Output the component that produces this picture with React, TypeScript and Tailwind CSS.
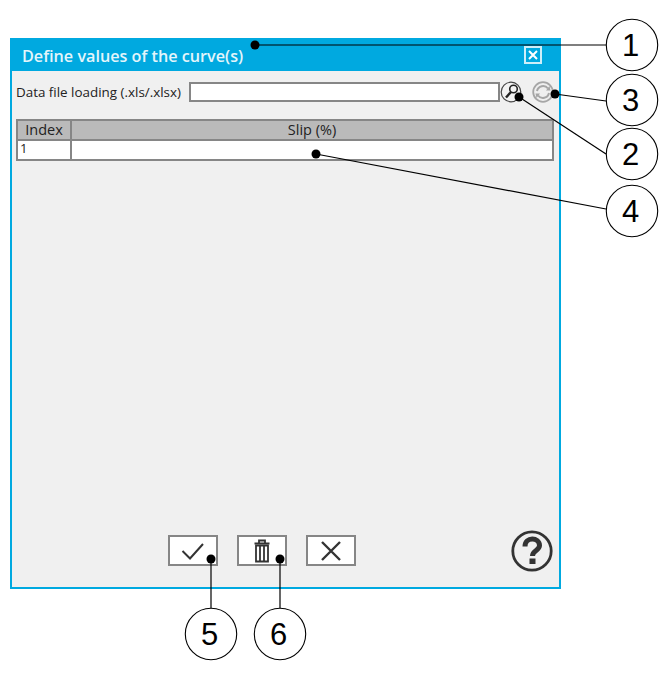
const callouts = [
  { n: "1", cx: 632, cy: 45, x1: 255, y1: 45, x2: 606, y2: 45 },
  { n: "3", cx: 632, cy: 100, x1: 555, y1: 94, x2: 606, y2: 101 },
  { n: "2", cx: 632, cy: 154, x1: 519, y1: 97, x2: 606, y2: 154 },
  { n: "4", cx: 632, cy: 211, x1: 316, y1: 154, x2: 606, y2: 209 },
  { n: "5", cx: 211, cy: 634, x1: 211, y1: 559, x2: 211, y2: 608 },
  { n: "6", cx: 280, cy: 634, x1: 280, y1: 559, x2: 280, y2: 608 },
];

function Callouts() {
  return (
    <svg className="absolute left-0 top-0" width="671" height="673" viewBox="0 0 671 673">
      {callouts.map((c) => (
        <g key={c.n}>
          <line x1={c.x1} y1={c.y1} x2={c.x2} y2={c.y2} stroke="#000" strokeWidth="1.2" />
          <circle cx={c.x1} cy={c.y1} r="4.5" fill="#000" />
          <circle cx={c.cx} cy={c.cy} r="25.7" fill="#fff" stroke="#000" strokeWidth="1.1" />
          <text x={c.cx - 1.5} y={c.cy + 11} textAnchor="middle" fontSize="31" fill="#000" fontFamily="'Liberation Sans', Arial, sans-serif">
            {c.n}
          </text>
        </g>
      ))}
    </svg>
  );
}

function ActionButton({ children }: { children: React.ReactNode }) {
  return (
    <button className="flex h-[31px] w-[50px] items-center justify-center border-2 border-[#868686] bg-white">
      {children}
    </button>
  );
}

export default function App() {
  return (
    <div className="relative h-[673px] w-[671px] overflow-hidden bg-white pl-[10px] pt-[38px] font-['Open_Sans','Noto_Sans',sans-serif]">
      <div className="flex h-[551px] w-[551px] flex-col border-2 border-t-0 border-[#00a9e0] bg-[#f0f0f0]">
        <div className="-mx-[2px] flex h-[33px] shrink-0 items-center justify-between bg-[#00a9e0] pl-[12px] pr-[19px]">
          <span className="pt-[3px] text-[16.2px] font-semibold leading-none text-[#e3f5fb]">Define values of the curve(s)</span>
          <span className="flex h-[18px] w-[18px] items-center justify-center border-2 border-[#cdeef9] bg-[#00a9e0]">
            <svg width="12" height="12" viewBox="0 0 12 12">
              <path d="M2 2 L10 10 M10 2 L2 10" stroke="#fff" strokeWidth="2" />
            </svg>
          </span>
        </div>

        <div className="flex min-h-0 flex-1 flex-col px-[4px]">
          <div className="mt-[11px] flex h-[20px] items-center">
            <span className="w-[173px] shrink-0 pt-[1px] text-[13.4px] leading-none text-[#222]">Data file loading (.xls/.xlsx)</span>
            <div className="h-[20px] w-[311px] border-2 border-[#868686] bg-white" />
            <svg width="22" height="22" viewBox="0 0 22 22">
              <circle cx="11" cy="11" r="9.8" fill="#f2f2f2" stroke="#444" strokeWidth="1.2" />
              <circle cx="13.5" cy="8" r="3.8" fill="none" stroke="#222" strokeWidth="1.6" />
              <path d="M11 11 L6 16.5" stroke="#222" strokeWidth="2.4" />
            </svg>
            <svg className="ml-[10px]" width="22" height="22" viewBox="0 0 22 22">
              <circle cx="11" cy="11" r="9.8" fill="#efefef" stroke="#a6a6a6" strokeWidth="1.8" />
              <path d="M5 10 A6.2 6.2 0 0 1 16 7.5 M17 12 A6.2 6.2 0 0 1 6 14.5" fill="none" stroke="#a6a6a6" strokeWidth="2" />
              <path d="M14 9.5 L18.5 9.5 L17.5 5 Z M8 12.5 L3.5 12.5 L4.5 17 Z" fill="#a6a6a6" />
            </svg>
          </div>

          <div className="mt-[17px] w-[538px] border-2 border-[#868686] bg-white text-[14.5px] text-[#222]">
            <div className="flex h-[20px] border-b-2 border-[#868686] bg-[#bababa]">
              <div className="flex w-[54px] items-center justify-center border-r-2 border-[#868686] pt-[1px] leading-none">Index</div>
              <div className="flex flex-1 items-center justify-center pt-[1px] leading-none">Slip (%)</div>
            </div>
            <div className="flex h-[18px]">
              <div className="w-[54px] border-r-2 border-[#868686] pl-[2px] text-[13px] leading-[15px]">1</div>
              <div className="flex-1" />
            </div>
          </div>

          <div className="relative mb-[21px] mt-auto flex h-[31px] items-center pl-[152px]">
            <div className="flex gap-[19px]">
              <ActionButton>
                <svg width="26" height="20" viewBox="0 0 26 20">
                  <path d="M2.5 10 L10 17.5 L23 3" fill="none" stroke="#333" strokeWidth="2" />
                </svg>
              </ActionButton>
              <ActionButton>
                <svg width="18" height="24" viewBox="0 0 18 24">
                  <path d="M1.5 4.5 H16.5 M6 4 V1.5 H12 V4" fill="none" stroke="#333" strokeWidth="1.8" />
                  <path d="M3 6.5 H15 V22.5 H3 Z M7 7 V22 M11 7 V22" fill="none" stroke="#333" strokeWidth="1.8" />
                </svg>
              </ActionButton>
              <ActionButton>
                <svg width="20" height="20" viewBox="0 0 20 20">
                  <path d="M1 1 L19 19 M19 1 L1 19" fill="none" stroke="#333" strokeWidth="2.4" />
                </svg>
              </ActionButton>
            </div>
            <svg className="absolute left-[495px] top-[-5px]" width="42" height="42" viewBox="0 0 42 42">
              <circle cx="21" cy="21" r="19.2" fill="none" stroke="#333" strokeWidth="2.8" />
              <path d="M14 16.5 C14 6.5 28.5 7 28.5 15.5 C28.5 20.5 21.5 20.5 21.5 26" fill="none" stroke="#333" strokeWidth="5" />
              <rect x="18.5" y="28.5" width="6" height="5.5" fill="#333" />
            </svg>
          </div>
        </div>
      </div>
      <Callouts />
    </div>
  );
}
